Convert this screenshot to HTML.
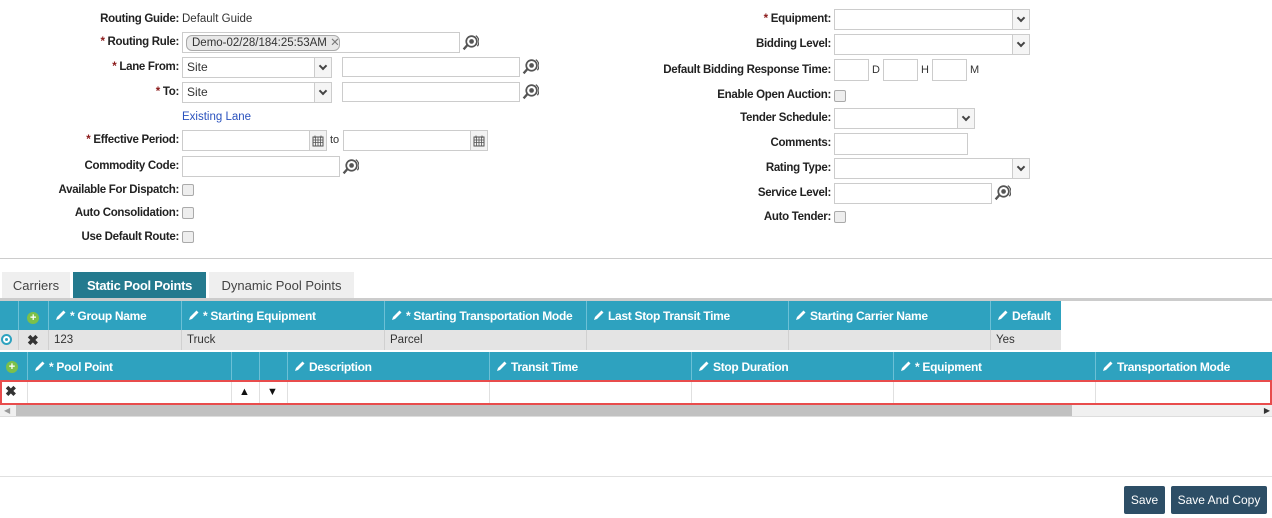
<!DOCTYPE html>
<html><head><meta charset="utf-8"><style>
*{box-sizing:border-box;margin:0;padding:0}
body{width:1272px;height:518px;background:#fff;font-family:"Liberation Sans",sans-serif;font-size:11px;color:#333;position:relative;overflow:hidden}
.a{position:absolute}
.lb{position:absolute;font-weight:bold;font-size:11.5px;letter-spacing:-0.3px;text-align:right;white-space:nowrap;color:#222;line-height:14px}
.lb b{color:#8b1a1a}
.in{position:absolute;border:1px solid #ccc;background:#fff}
.sel{position:absolute;border:1px solid #ccc;background:#fff;padding-left:4px;font-size:12px;line-height:19px}
.sel i{position:absolute;right:0;top:0;bottom:0;width:17px;border-left:1px solid #ccc;background:#f5f5f5}
.sel i:after{content:"";position:absolute;left:5px;top:5px;width:4px;height:4px;border-right:2px solid #444;border-bottom:2px solid #444;transform:rotate(45deg)}
.cb{position:absolute;width:12px;height:12px;border:1px solid #aaa;border-radius:2px;background:#eee}
.th{position:absolute;height:100%;border-left:1px solid #6cc0d6;color:#fff;font-weight:bold;font-size:12px;letter-spacing:-0.3px;line-height:31px;padding-left:6px;white-space:nowrap}
.td{position:absolute;height:100%;border-left:1px solid #d0d0d0;line-height:17px;padding-left:5px;font-size:11.5px}
.pen{display:inline-block;vertical-align:-1px;margin-right:3px}
</style></head><body>
<svg width="0" height="0" style="position:absolute"><defs>
<symbol id="lk" viewBox="0 0 16 16"><circle cx="9" cy="7" r="5" fill="none" stroke="#555" stroke-width="1.6"/><circle cx="9" cy="7" r="2.2" fill="#555"/><path d="M5 10.5 L1.5 14.5" stroke="#555" stroke-width="2.2"/><path d="M13 1.5 A7 7 0 0 1 14.5 11.5" stroke="#555" stroke-width="1.2" fill="none"/></symbol>
<symbol id="pn" viewBox="0 0 12 12"><path d="M1 11 L2 8 L8.5 1.5 L10.5 3.5 L4 10 Z" fill="#fff"/></symbol>
<symbol id="cal" viewBox="0 0 12 12"><rect x="1" y="2" width="10" height="9" fill="none" stroke="#555"/><path d="M1 5H11M1 7.5H11M3.5 2V11M6 2V11M8.5 2V11M3 0.5V3M9 0.5V3" stroke="#555" stroke-width="0.8"/></symbol>
</defs></svg>

<div class="lb" style="right:1093px;top:12px">Routing Guide:</div><div class="a" style="left:182px;top:12px;line-height:14px;font-size:11.5px">Default Guide</div>
<div class="lb" style="right:1093px;top:35px"><b>*</b> Routing Rule:</div>
<div class="in" style="left:182px;top:32px;width:278px;height:21px"><div class="a" style="left:3px;top:2px;height:16px;width:154px;border:1px solid #aaa;border-radius:6px;background:#e8e8e8;line-height:14px;padding-left:5px;white-space:nowrap;font-size:11.5px">Demo-02/28/184:25:53AM <span style="color:#777">✕</span></div></div>
<svg class="a" style="left:462px;top:34px" width="17" height="17"><use href="#lk"/></svg>
<div class="lb" style="right:1093px;top:60px"><b>*</b> Lane From:</div>
<div class="sel" style="left:182px;top:57px;width:150px;height:21px">Site<i></i></div>
<div class="in" style="left:342px;top:57px;width:178px;height:20px"></div>
<svg class="a" style="left:522px;top:58px" width="17" height="17"><use href="#lk"/></svg>
<div class="lb" style="right:1093px;top:85px"><b>*</b> To:</div>
<div class="sel" style="left:182px;top:82px;width:150px;height:21px">Site<i></i></div>
<div class="in" style="left:342px;top:82px;width:178px;height:20px"></div>
<svg class="a" style="left:522px;top:83px" width="17" height="17"><use href="#lk"/></svg>
<div class="a" style="left:182px;top:110px;color:#2a52be;line-height:14px;font-size:11.5px">Existing Lane</div>
<div class="lb" style="right:1093px;top:133px"><b>*</b> Effective Period:</div>
<div class="in" style="left:182px;top:130px;width:145px;height:21px"><div class="a" style="right:0;top:0;bottom:0;width:17px;border-left:1px solid #ccc;background:#f3f3f3"><svg style="margin:4px 2px" width="12" height="12"><use href="#cal"/></svg></div></div>
<div class="a" style="left:330px;top:133px;line-height:14px">to</div>
<div class="in" style="left:343px;top:130px;width:145px;height:21px"><div class="a" style="right:0;top:0;bottom:0;width:17px;border-left:1px solid #ccc;background:#f3f3f3"><svg style="margin:4px 2px" width="12" height="12"><use href="#cal"/></svg></div></div>
<div class="lb" style="right:1093px;top:159px">Commodity Code:</div>
<div class="in" style="left:182px;top:156px;width:158px;height:21px"></div>
<svg class="a" style="left:342px;top:158px" width="17" height="17"><use href="#lk"/></svg>
<div class="lb" style="right:1093px;top:183px">Available For Dispatch:</div><div class="cb" style="left:182px;top:184px"></div>
<div class="lb" style="right:1093px;top:206px">Auto Consolidation:</div><div class="cb" style="left:182px;top:207px"></div>
<div class="lb" style="right:1093px;top:230px">Use Default Route:</div><div class="cb" style="left:182px;top:231px"></div>

<div class="lb" style="right:441px;top:12px"><b>*</b> Equipment:</div>
<div class="sel" style="left:834px;top:9px;width:196px;height:21px"><i></i></div>
<div class="lb" style="right:441px;top:37px">Bidding Level:</div>
<div class="sel" style="left:834px;top:34px;width:196px;height:21px"><i></i></div>
<div class="lb" style="right:441px;top:63px">Default Bidding Response Time:</div>
<div class="in" style="left:834px;top:59px;width:35px;height:22px"></div><div class="a" style="left:872px;top:64px">D</div>
<div class="in" style="left:883px;top:59px;width:35px;height:22px"></div><div class="a" style="left:921px;top:64px">H</div>
<div class="in" style="left:932px;top:59px;width:35px;height:22px"></div><div class="a" style="left:970px;top:64px">M</div>
<div class="lb" style="right:441px;top:88px">Enable Open Auction:</div><div class="cb" style="left:834px;top:90px"></div>
<div class="lb" style="right:441px;top:111px">Tender Schedule:</div>
<div class="sel" style="left:834px;top:108px;width:141px;height:21px"><i></i></div>
<div class="lb" style="right:441px;top:136px">Comments:</div>
<div class="in" style="left:834px;top:133px;width:134px;height:22px"></div>
<div class="lb" style="right:441px;top:161px">Rating Type:</div>
<div class="sel" style="left:834px;top:158px;width:196px;height:21px"><i></i></div>
<div class="lb" style="right:441px;top:186px">Service Level:</div>
<div class="in" style="left:834px;top:183px;width:158px;height:21px"></div>
<svg class="a" style="left:994px;top:184px" width="17" height="17"><use href="#lk"/></svg>
<div class="lb" style="right:441px;top:210px">Auto Tender:</div><div class="cb" style="left:834px;top:211px"></div>

<div class="a" style="left:0;top:258px;width:1272px;height:1px;background:#ccc"></div>

<div class="a" style="left:2px;top:272px;width:68px;height:26px;background:#efefef;font-size:13px;line-height:28px;text-align:center;color:#444">Carriers</div>
<div class="a" style="left:73px;top:272px;width:133px;height:27px;background:#247a8e;font-size:13px;line-height:28px;text-align:center;color:#fff;font-weight:bold;letter-spacing:-0.3px">Static Pool Points</div>
<div class="a" style="left:209px;top:272px;width:145px;height:26px;background:#efefef;font-size:13px;line-height:28px;text-align:center;color:#444">Dynamic Pool Points</div>
<div class="a" style="left:0;top:298px;width:1272px;height:3px;background:#ccc"></div>

<div class="a" style="left:0;top:301px;width:1061px;height:32px;background:#2ea2bf">
<div class="th" style="left:18px;width:30px;padding-left:8px"><span style="display:inline-block;width:12px;height:12px;border-radius:50%;background:#7cc04a;color:#fff;font-size:11px;line-height:12px;text-align:center;vertical-align:-1px">+</span></div>
<div class="th" style="left:48px"><svg class="pen" width="12" height="12"><use href="#pn"/></svg>* Group Name</div>
<div class="th" style="left:181px"><svg class="pen" width="12" height="12"><use href="#pn"/></svg>* Starting Equipment</div>
<div class="th" style="left:384px"><svg class="pen" width="12" height="12"><use href="#pn"/></svg>* Starting Transportation Mode</div>
<div class="th" style="left:586px"><svg class="pen" width="12" height="12"><use href="#pn"/></svg>Last Stop Transit Time</div>
<div class="th" style="left:788px"><svg class="pen" width="12" height="12"><use href="#pn"/></svg>Starting Carrier Name</div>
<div class="th" style="left:990px"><svg class="pen" width="12" height="12"><use href="#pn"/></svg>Default</div>
</div>
<div class="a" style="left:0;top:330px;width:1061px;height:20px;background:#e4e4e4">
<div class="a" style="left:1px;top:4px;width:11px;height:11px;border:2px solid #2ea2bf;border-radius:50%;background:#fff"><div style="margin:2px;width:3px;height:3px;background:#2ea2bf;border-radius:50%"></div></div>
<div class="td" style="left:18px;width:30px;font-weight:bold;font-size:14px;line-height:20px;padding-left:8px;color:#333">✖</div>
<div class="td" style="left:48px;line-height:20px">123</div>
<div class="td" style="left:181px;line-height:20px">Truck</div>
<div class="td" style="left:384px;line-height:20px">Parcel</div>
<div class="td" style="left:586px"></div><div class="td" style="left:788px"></div>
<div class="td" style="left:990px;line-height:20px">Yes</div>
</div>

<div class="a" style="left:0;top:352px;width:1272px;height:30px;background:#2ea2bf">
<div class="a" style="left:6px;top:9px;width:12px;height:12px;border-radius:50%;background:#7cc04a;color:#fff;font-size:11px;line-height:12px;text-align:center;font-weight:bold">+</div>
<div class="th" style="left:27px;line-height:30px"><svg class="pen" width="12" height="12"><use href="#pn"/></svg>* Pool Point</div>
<div class="th" style="left:231px"></div><div class="th" style="left:259px"></div>
<div class="th" style="left:287px;line-height:30px"><svg class="pen" width="12" height="12"><use href="#pn"/></svg>Description</div>
<div class="th" style="left:489px;line-height:30px"><svg class="pen" width="12" height="12"><use href="#pn"/></svg>Transit Time</div>
<div class="th" style="left:691px;line-height:30px"><svg class="pen" width="12" height="12"><use href="#pn"/></svg>Stop Duration</div>
<div class="th" style="left:893px;line-height:30px"><svg class="pen" width="12" height="12"><use href="#pn"/></svg>* Equipment</div>
<div class="th" style="left:1095px;line-height:30px"><svg class="pen" width="12" height="12"><use href="#pn"/></svg>Transportation Mode</div>
</div>
<div class="a" style="left:0;top:380px;width:1272px;height:25px;border:2px solid #e84c4c;background:#fff">
<div class="a" style="left:3px;top:0;font-size:14px;line-height:19px;font-weight:bold;color:#333">✖</div>
<div class="td" style="left:25px;border-color:#e0e0e0"></div>
<div class="td" style="left:229px;border-color:#e0e0e0;font-size:11px;line-height:20px;padding-left:7px;color:#111">▲</div>
<div class="td" style="left:257px;border-color:#e0e0e0;font-size:11px;line-height:20px;padding-left:7px;color:#111">▼</div>
<div class="td" style="left:285px;border-color:#e0e0e0"></div><div class="td" style="left:487px;border-color:#e0e0e0"></div>
<div class="td" style="left:689px;border-color:#e0e0e0"></div><div class="td" style="left:891px;border-color:#e0e0e0"></div>
<div class="td" style="left:1093px;border-color:#e0e0e0"></div>
</div>
<div class="a" style="left:0;top:405px;width:1272px;height:12px;background:#f0f0f0;border-bottom:1px solid #ddd">
<div class="a" style="left:4px;top:1px;font-size:8px;color:#999">◀</div>
<div class="a" style="left:16px;top:0;width:1056px;height:11px;background:#c1c1c1"></div>
<div class="a" style="right:2px;top:1px;font-size:8px;color:#333">▶</div>
</div>

<div class="a" style="left:0;top:476px;width:1272px;height:1px;background:#e0e0e0"></div>
<div class="a" style="left:1124px;top:486px;width:41px;height:28px;background:#2d4e66;border-radius:2px;color:#fff;font-size:12px;line-height:28px;text-align:center">Save</div>
<div class="a" style="left:1171px;top:486px;width:96px;height:28px;background:#2d4e66;border-radius:2px;color:#fff;font-size:12px;line-height:28px;text-align:center">Save And Copy</div>
</body></html>
